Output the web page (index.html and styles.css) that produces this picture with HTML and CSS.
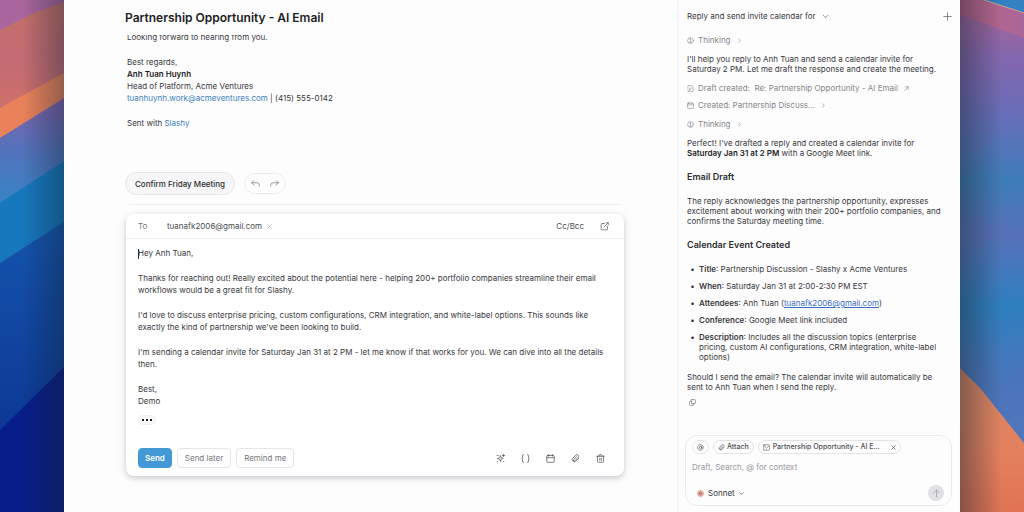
FILE: index.html
```html
<!DOCTYPE html>
<html lang="en">
<head>
<meta charset="utf-8">
<meta name="viewport" content="width=device-width, initial-scale=1">
<title>Partnership Opportunity - AI Email</title>
<link rel="stylesheet" href="styles.css">
</head>
<body>
<svg class="sprite" aria-hidden="true">
  <symbol id="chevron-down" viewBox="0 0 24 24"><path d="m4 8 8 8 8-8"/></symbol>
  <symbol id="chevron-right" viewBox="0 0 24 24"><path d="m8 4 8 8-8 8"/></symbol>
  <symbol id="plus" viewBox="0 0 24 24"><path d="M12 2v20M2 12h20"/></symbol>
  <symbol id="close" viewBox="0 0 24 24"><path d="m3 3 18 18M21 3 3 21"/></symbol>
  <symbol id="brain" viewBox="0 0 24 24"><circle cx="12" cy="12" r="10"/><path d="M12 6v12M9 8l3-2M9 18h6"/></symbol>
  <symbol id="draft" viewBox="0 0 24 24"><path d="M3 12V4a2 2 0 0 1 2-2h10l6 5v13a2 2 0 0 1-2 2H5a2 2 0 0 1-2-2v-2M8 17l1-4 4-4 2 2-4 5z"/></symbol>
  <symbol id="calendar" viewBox="0 0 24 24"><rect x="2" y="4" width="20" height="18" rx="2"/><path d="M2 10h20M7 1v5M17 1v5"/></symbol>
  <symbol id="arrow-ne" viewBox="0 0 24 24"><path d="M3 21 20 4M6 4h14v14"/></symbol>
  <symbol id="copy" viewBox="0 0 24 24"><rect x="8" y="2" width="14" height="14" rx="2"/><path d="M16 16v4a2 2 0 0 1-2 2H4a2 2 0 0 1-2-2V10a2 2 0 0 1 2-2h4"/></symbol>
  <symbol id="at" viewBox="0 0 24 24"><circle cx="12" cy="12" r="4"/><path d="M16 8v5a3 3 0 0 0 6 0v-1a10 10 0 1 0-4 8"/></symbol>
  <symbol id="clip" viewBox="0 0 24 24"><path d="m21 11-9 9a6 6 0 0 1-8-8l9-9a4 4 0 0 1 6 6l-9 9a2 2 0 0 1-3-3l8-8"/></symbol>
  <symbol id="mail" viewBox="0 0 24 24"><rect x="1" y="3" width="22" height="18" rx="3"/><path d="m5 8 7 6 7-6"/></symbol>
  <symbol id="arrow-up" viewBox="0 0 24 24"><path d="M12 21V3M5 10l7-7 7 7"/></symbol>
  <symbol id="reply" viewBox="0 0 24 24"><path d="M8 4 2 10l6 6M2 10h14a6 6 0 0 1 6 6v3"/></symbol>
  <symbol id="forward" viewBox="0 0 24 24"><path d="m16 4 6 6-6 6M22 10H8a6 6 0 0 0-6 6v3"/></symbol>
  <symbol id="external" viewBox="0 0 24 24"><path d="M12 4H5a2 2 0 0 0-2 2v13a2 2 0 0 0 2 2h13a2 2 0 0 0 2-2v-7M16 2h6v6M22 2 11 13"/></symbol>
  <symbol id="sparkles" viewBox="0 0 24 24"><path d="m12 5 2 5 5 2-5 2-2 6-2-6-6-2 6-2zM20 1v6M17 4h6M3 4h3M4 20v1M20 20h1"/></symbol>
  <symbol id="braces" viewBox="0 0 24 24"><path d="M7 2H6a2 2 0 0 0-2 2v6a2 2 0 0 1-2 2 2 2 0 0 1 2 2v6a2 2 0 0 0 2 2h1M17 2h1a2 2 0 0 1 2 2v6a2 2 0 0 0 2 2 2 2 0 0 0-2 2v6a2 2 0 0 1-2 2h-1"/></symbol>
  <symbol id="trash" viewBox="0 0 24 24"><path d="M2 6h20M20 6v14a2 2 0 0 1-2 2H6a2 2 0 0 1-2-2V6M8 6V3a1 1 0 0 1 1-1h6a1 1 0 0 1 1 1v3M10 11v6M14 11v6"/></symbol>
  <symbol id="burst" viewBox="0 0 24 24"><path d="M12 1v22M1 12h22M4 4l16 16M20 4 4 20M8 2l8 20M16 2 8 22M2 8l20 8M22 8 2 16"/></symbol>
</svg>
<div class="desktop">
  <svg class="wall" viewBox="0 0 64 512" preserveAspectRatio="none" aria-hidden="true">
    <defs>
      <linearGradient id="l-coral" x1="0" y1="0" x2="0" y2="1"><stop offset="0" stop-color="#c46f68"/><stop offset=".5" stop-color="#c26b74"/><stop offset="1" stop-color="#d07068"/></linearGradient>
      <linearGradient id="l-violet" x1="0" y1="0" x2="0" y2="1"><stop offset="0" stop-color="#8062aa"/><stop offset=".5" stop-color="#5273bb"/><stop offset="1" stop-color="#3485c6"/></linearGradient>
      <linearGradient id="l-blue" x1="0" y1="0" x2="0" y2="1"><stop offset="0" stop-color="#1455ad"/><stop offset="1" stop-color="#0d3795"/></linearGradient>
      <linearGradient id="l-shade" x1="0" y1="0" x2="1" y2="0"><stop offset=".35" stop-color="#102030" stop-opacity="0"/><stop offset="1" stop-color="#102030" stop-opacity=".38"/></linearGradient>
    </defs>
    <path fill="#a9669c" d="M0 0h64v10L0 40z"/>
    <path fill="url(#l-coral)" d="M0 30 34 13 64 2v80L0 112z"/>
    <path fill="#e9825b" d="M0 108 64 73v30L0 140z"/>
    <path fill="url(#l-violet)" d="M0 138 64 98v70L0 208z"/>
    <path fill="#1677bd" d="M0 203 64 161v66L0 268z"/>
    <path fill="url(#l-blue)" d="M0 263 64 222v150L0 435z"/>
    <path fill="#071d87" d="M0 430 64 367v145H0z"/>
    <path fill="url(#l-shade)" d="M0 0h64v512H0z"/>
  </svg>

  <div class="window">
    <main class="mail">
      <h1 class="subject">Partnership Opportunity - AI Email</h1>
      <div class="message">
        <p>Looking forward to hearing from you.</p>
        <p>Best regards,<br><strong>Anh Tuan Huynh</strong><br>Head of Platform, Acme Ventures<br><a href="#">tuanhuynh.work@acmeventures.com</a> | (415) 555-0142</p>
        <p>Sent with <a href="#">Slashy</a></p>
      </div>
      <div class="actions">
        <button class="pill" type="button">Confirm Friday Meeting</button>
        <div class="pill-group">
          <button type="button" aria-label="Reply"><svg class="icon"><use href="#reply"/></svg></button>
          <button type="button" aria-label="Forward"><svg class="icon"><use href="#forward"/></svg></button>
        </div>
      </div>
      <hr class="rule">
      <section class="compose" aria-label="Reply">
        <div class="recipients">
          <span class="to">To</span>
          <span>tuanafk2006@gmail.com</span>
          <button class="remove" type="button" aria-label="Remove recipient"><svg class="icon tiny"><use href="#close"/></svg></button>
          <button class="cc" type="button">Cc/Bcc</button>
          <button class="popout" type="button" aria-label="Pop out"><svg class="icon"><use href="#external"/></svg></button>
        </div>
        <div class="editor" contenteditable="true" role="textbox" aria-multiline="true" aria-label="Message body">
          <p><span class="caret"></span>Hey Anh Tuan,</p>
          <p>Thanks for reaching out! Really excited about the potential here - helping 200+ portfolio companies streamline their email workflows would be a great fit for Slashy.</p>
          <p>I'd love to discuss enterprise pricing, custom configurations, CRM integration, and white-label options. This sounds like exactly the kind of partnership we've been looking to build.</p>
          <p>I'm sending a calendar invite for Saturday Jan 31 at 2 PM - let me know if that works for you. We can dive into all the details then.</p>
          <p>Best,<br>Demo</p>
        </div>
        <button class="more" type="button" aria-label="Show trimmed content"><i></i><i></i><i></i></button>
        <div class="toolbar">
          <button class="btn primary" type="button">Send</button>
          <button class="btn" type="button">Send later</button>
          <button class="btn" type="button">Remind me</button>
          <div class="tools">
            <button type="button" aria-label="Improve"><svg class="icon"><use href="#sparkles"/></svg></button>
            <button type="button" aria-label="Snippets"><svg class="icon"><use href="#braces"/></svg></button>
            <button type="button" aria-label="Calendar"><svg class="icon"><use href="#calendar"/></svg></button>
            <button type="button" aria-label="Attach file"><svg class="icon"><use href="#clip"/></svg></button>
            <button type="button" aria-label="Discard"><svg class="icon"><use href="#trash"/></svg></button>
          </div>
        </div>
      </section>
    </main>

    <aside class="chat">
      <header class="chat-head">
        <button class="thread" type="button">Reply and send invite calendar for <svg class="icon small"><use href="#chevron-down"/></svg></button>
        <button class="popout" type="button" aria-label="New chat"><svg class="icon"><use href="#plus"/></svg></button>
      </header>
      <div class="log">
        <button class="status" type="button"><svg class="icon small"><use href="#brain"/></svg>Thinking <svg class="icon tiny"><use href="#chevron-right"/></svg></button>
        <p>I'll help you reply to Anh Tuan and send a calendar invite for Saturday 2 PM. Let me draft the response and create the meeting.</p>
        <div class="steps">
          <button class="status" type="button"><svg class="icon small"><use href="#draft"/></svg><span>Draft created:&nbsp; Re: Partnership Opportunity - AI Email</span><svg class="icon tiny"><use href="#arrow-ne"/></svg></button>
          <button class="status" type="button"><svg class="icon small"><use href="#calendar"/></svg>Created: Partnership Discuss... <svg class="icon tiny"><use href="#chevron-right"/></svg></button>
        </div>
        <button class="status" type="button"><svg class="icon small"><use href="#brain"/></svg>Thinking <svg class="icon tiny"><use href="#chevron-right"/></svg></button>
        <p>Perfect! I've drafted a reply and created a calendar invite for <strong>Saturday Jan 31 at 2 PM</strong> with a Google Meet link.</p>
        <h2>Email Draft</h2>
        <p>The reply acknowledges the partnership opportunity, expresses excitement about working with their 200+ portfolio companies, and confirms the Saturday meeting time.</p>
        <h2>Calendar Event Created</h2>
        <ul>
          <li><b>Title</b>: Partnership Discussion - Slashy x Acme Ventures</li>
          <li><b>When</b>: Saturday Jan 31 at 2:00-2:30 PM EST</li>
          <li><b>Attendees</b>: Anh Tuan (<a href="#">tuanafk2006@gmail.com</a>)</li>
          <li><b>Conference</b>: Google Meet link included</li>
          <li><b>Description</b>: Includes all the discussion topics (enterprise pricing, custom AI configurations, CRM integration, white-label options)</li>
        </ul>
        <p>Should I send the email? The calendar invite will automatically be sent to Anh Tuan when I send the reply.</p>
        <button class="copy" type="button" aria-label="Copy"><svg class="icon small"><use href="#copy"/></svg></button>
      </div>
      <form class="prompt">
        <div class="chips">
          <button class="chip" type="button" aria-label="Mention"><svg class="icon small"><use href="#at"/></svg></button>
          <button class="chip" type="button"><svg class="icon small"><use href="#clip"/></svg>Attach</button>
          <button class="chip context" type="button"><svg class="icon small"><use href="#mail"/></svg>Partnership Opportunity - AI E...<svg class="icon tiny end"><use href="#close"/></svg></button>
        </div>
        <input class="ask" type="text" aria-label="Message" placeholder="Draft, Search, @ for context">
        <div class="prompt-foot">
          <button class="model" type="button"><svg class="icon small burst"><use href="#burst"/></svg>Sonnet <svg class="icon tiny"><use href="#chevron-down"/></svg></button>
          <button class="submit" type="button" aria-label="Send prompt"><svg class="icon"><use href="#arrow-up"/></svg></button>
        </div>
      </form>
    </aside>
  </div>

  <svg class="wall" viewBox="0 0 64 512" preserveAspectRatio="none" aria-hidden="true">
    <defs>
      <linearGradient id="r-main" gradientUnits="userSpaceOnUse" x1="0" y1="0" x2="0" y2="450"><stop offset="0" stop-color="#ac6394"/><stop offset=".13" stop-color="#8367ae"/><stop offset=".27" stop-color="#646fb9"/><stop offset=".4" stop-color="#3d7cb8"/><stop offset=".52" stop-color="#5771b8"/><stop offset=".68" stop-color="#2f7fbf"/><stop offset=".84" stop-color="#4a75ba"/><stop offset="1" stop-color="#5275bc"/></linearGradient>
      <linearGradient id="r-pink" x1="0" y1="0" x2="1" y2="0"><stop offset="0" stop-color="#bd6285"/><stop offset="1" stop-color="#aa6798"/></linearGradient>
      <linearGradient id="r-coral" x1="0" y1="0" x2="0" y2="1"><stop offset="0" stop-color="#da8864"/><stop offset=".6" stop-color="#e4805e"/><stop offset="1" stop-color="#df7353"/></linearGradient>
      <linearGradient id="r-shade" x1="0" y1="0" x2="1" y2="0"><stop offset="0" stop-color="#1c2634" stop-opacity=".45"/><stop offset=".65" stop-color="#1c2634" stop-opacity="0"/></linearGradient>
    </defs>
    <path fill="url(#r-main)" d="M0 0h64v450H0z"/>
    <path fill="url(#r-pink)" d="M0 0h22l42 14v24L0 14z"/>
    <path fill="#3380c2" d="M22 0h42v13z"/>
    <path fill="none" stroke="#e2a184" stroke-width="1" d="M24 0 64 13"/>
    <path fill="url(#r-coral)" d="m0 368 20 20 44 55v69H0z"/>
    <path fill="url(#r-shade)" d="M0 0h64v512H0z"/>
  </svg>
</div>
</body>
</html>
```
FILE: styles.css
```css
* { box-sizing: border-box; margin: 0; padding: 0; }
body { font: 8px/12px Inter, "Liberation Sans", sans-serif; color: #38383c; }
button { font: inherit; color: inherit; background: none; border: 0; display: flex; align-items: center; white-space: nowrap; }
a { color: #3b7fbd; text-decoration: none; }
strong { font-weight: 600; color: #1c1c1f; }
b { font-weight: 600; }
.sprite { display: none; }
.icon { width: 9px; height: 9px; flex: none; fill: none; stroke: currentColor; stroke-width: 2; stroke-linecap: round; stroke-linejoin: round; }
.icon.small { width: 7px; height: 7px; stroke-width: 2; }
.icon.tiny { width: 5px; height: 5px; stroke-width: 3; }

.desktop { display: grid; grid-template-columns: 64px minmax(0, 1fr) 64px; min-height: 100vh; }
.wall { width: 100%; height: 100%; display: block; }
.window { display: grid; grid-template-columns: minmax(0, 1fr) 283px; background: #fefdfe; }

.mail { padding: 0 53px 24px 61px; }
.subject { font-size: 12px; line-height: 16px; font-weight: 600; color: #1c1c1f; padding: 10px 0 9px; }
.message { overflow: hidden; padding: 0 2px; display: grid; gap: 13px; }
.message p:first-child { margin-top: -4px; }
.actions { display: flex; align-items: center; gap: 9px; margin-top: 43px; }
.pill { height: 23px; padding: 0 9px; border: 1px solid #e6e5e8; border-radius: 12px; background: #f6f5f7; font-weight: 500; color: #2d2d31; }
.pill-group { display: flex; gap: 10px; height: 21px; align-items: center; padding: 0 6px; border: 1px solid #ebeaed; border-radius: 11px; color: #7d7d82; }
.rule { border: 0; border-top: 1px solid #efeef0; margin: 9px 4px; }

.compose { margin-left: 1px; border-radius: 8px; background: #fff; box-shadow: 0 2px 5px rgba(40, 30, 50, .18), 0 2px 12px rgba(40, 30, 50, .08); padding-bottom: 8px; }
.recipients { display: flex; align-items: center; height: 25px; padding: 0 15px 0 12px; border-bottom: 1px solid #efeef0; color: #4b4b50; }
.to { width: 29px; color: #77777c; }
.remove { margin-left: 5px; color: #a3a3a8; }
.cc { margin-left: auto; margin-right: 16px; }
.popout { color: #66666b; }
.editor { padding: 8px 12px 0; display: grid; gap: 13px; outline: none; }
.caret { display: inline-block; width: 1px; height: 10px; margin-right: -1px; background: #2d2d31; vertical-align: middle; }
.more { height: 10px; margin: 8px 12px 0; padding: 0 3px; gap: 2px; border: 1px solid #ececef; border-radius: 5px; background: #f8f8f9; }
.more i { width: 2px; height: 2px; background: #1c1c1f; }
.toolbar { display: flex; align-items: center; gap: 5px; margin-top: 23px; padding: 0 19px 0 12px; }
.btn { height: 20px; padding: 0 7px; border: 1px solid #e6e5e8; border-radius: 4px; color: #77777c; }
.btn.primary { padding: 0 6px; background: #4299d5; border-color: #4299d5; color: #fff; font-weight: 600; }
.tools { display: flex; gap: 16px; margin-left: auto; color: #55555a; }

.chat { display: flex; flex-direction: column; border-left: 2px solid #f5f4f6; }
.chat-head { display: flex; align-items: center; justify-content: space-between; height: 32px; padding: 0 8px; }
.thread { gap: 6px; }
.log { padding: 2px 12px 0 8px; line-height: 10px; }
.log p { margin: 8px 0; }
.log h2 { font-size: 9px; line-height: 12px; font-weight: 600; color: #2d2d31; margin: 13px 0; }
.status { gap: 4px; line-height: 12px; color: #85858a; }
.status .tiny { margin-left: 2px; }
.steps { display: grid; gap: 5px; margin-bottom: 7px; }
.log ul { padding-left: 12px; display: grid; gap: 7px; margin-bottom: 10px; list-style: "•  "; }
.log li { padding-right: 4px; }
.log li::marker { color: #2d2d31; }
.log li a { color: #3a6fc4; text-decoration: underline; }
.log .copy { margin: -1px 0 0 2px; color: #66666b; }

.prompt { margin: auto 8px 6px 6px; padding: 4px 7px 4px 6px; border: 1px solid #ebeaed; border-radius: 12px; }
.chips { display: flex; gap: 4px; }
.chip { height: 14px; gap: 2px; padding: 0 4px; border: 1px solid #e3e2e5; border-radius: 7px; font-size: 7px; font-weight: 500; color: #4b4b50; }
.context { gap: 3px; }
.end { margin-left: 8px; }
.ask { display: block; width: 100%; margin-top: 7px; border: 0; outline: 0; background: none; font: inherit; }
.ask::placeholder { color: #98989d; opacity: 1; }
.prompt-foot { display: flex; align-items: center; justify-content: space-between; margin-top: 12px; }
.model { gap: 4px; padding-left: 5px; }
.burst { color: #c8695a; }
.submit { width: 16px; height: 16px; justify-content: center; border-radius: 50%; background: #e0dfe3; color: #98989d; }
```
